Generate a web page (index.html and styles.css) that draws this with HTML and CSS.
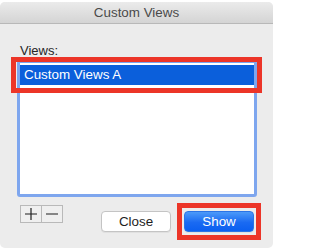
FILE: index.html
```html
<!DOCTYPE html>
<html>
<head>
<meta charset="utf-8">
<link rel="stylesheet" href="styles.css">
</head>
<body>
<div class="window">
  <div class="titlebar">Custom Views</div>
  <div class="content">
    <div class="label">Views:</div>
    <div class="list">
      <div class="row selected">Custom Views A</div>
    </div>
    <div class="footer">
      <div class="pm">
        <div class="pm-btn">
          <svg width="12" height="12" viewBox="0 0 12 12"><path d="M6 0V12M0 6H12" stroke="#1e1e1e" stroke-width="1.2"/></svg>
        </div>
        <div class="pm-btn">
          <svg width="12" height="12" viewBox="0 0 12 12"><path d="M0 6H12" stroke="#1e1e1e" stroke-width="1.2"/></svg>
        </div>
      </div>
      <div class="actions">
        <button class="btn">Close</button>
        <button class="btn primary">Show</button>
      </div>
    </div>
  </div>
  <div class="mark mark-row"></div>
  <div class="mark mark-show"></div>
</div>
</body>
</html>
```

FILE: styles.css
```css
html, body {
  margin: 0;
  padding: 0;
  background: #ffffff;
}
body {
  padding-top: 2px;
  font-family: "Liberation Sans", Arial, sans-serif;
  font-size: 13px;
}
.window {
  position: relative;
  width: 273px;
  height: 246px;
  background: #ececec;
  border-radius: 5px 5px 5px 5px;
  overflow: hidden;
  box-sizing: border-box;
}
.titlebar {
  height: 21px;
  line-height: 21px;
  text-align: center;
  color: #4a4a4a;
  font-size: 13.4px;
  background: linear-gradient(#ebebeb, #d4d4d4);
  border-bottom: 1px solid #b8b8b8;
}
.content {
  padding: 19px 16px 0 17px;
}
.label {
  padding-left: 3px;
  color: #262626;
  line-height: 15px;
  height: 17px;
}
.list {
  width: 240px;
  height: 137px;
  box-sizing: border-box;
  border: 3px solid #7ea6ee;
  border-radius: 3px;
  background: #fff;
  padding-top: 2px;
}
.row {
  height: 20px;
  line-height: 20px;
  padding-left: 4px;
  font-size: 13.4px;
}
.selected {
  background: #0b5fdb;
  color: #fff;
}
.footer {
  display: flex;
  justify-content: space-between;
  margin-top: 8px;
}
.pm {
  display: flex;
  margin-left: 3px;
  height: 18px;
  border: 1px solid #b9b9b9;
  box-sizing: border-box;
  background: #efefef;
}
.pm-btn {
  width: 20px;
  display: flex;
  align-items: center;
  justify-content: center;
}
.pm-btn + .pm-btn {
  border-left: 1px solid #b9b9b9;
}
.actions {
  display: flex;
  gap: 13px;
  margin-top: 6px;
  margin-right: 3px;
}
.btn {
  width: 70px;
  height: 21px;
  box-sizing: border-box;
  border: 1px solid #c4c4c4;
  border-radius: 4px;
  background: #ffffff;
  font-family: inherit;
  font-size: 13.4px;
  color: #1e1e1e;
  padding: 0;
  box-shadow: 0 1px 0 rgba(0,0,0,0.05);
}
.btn.primary {
  border: 1px solid #2b74e6;
  background: linear-gradient(#4c9af9, #1a6af2 55%, #0b5ff0);
  color: #fff;
}
.mark {
  position: absolute;
  border: 5px solid #ec3528;
  box-sizing: border-box;
}
.mark-row {
  left: 11px;
  top: 55px;
  width: 251px;
  height: 36px;
}
.mark-show {
  left: 177px;
  top: 201px;
  width: 84px;
  height: 37px;
}
```
